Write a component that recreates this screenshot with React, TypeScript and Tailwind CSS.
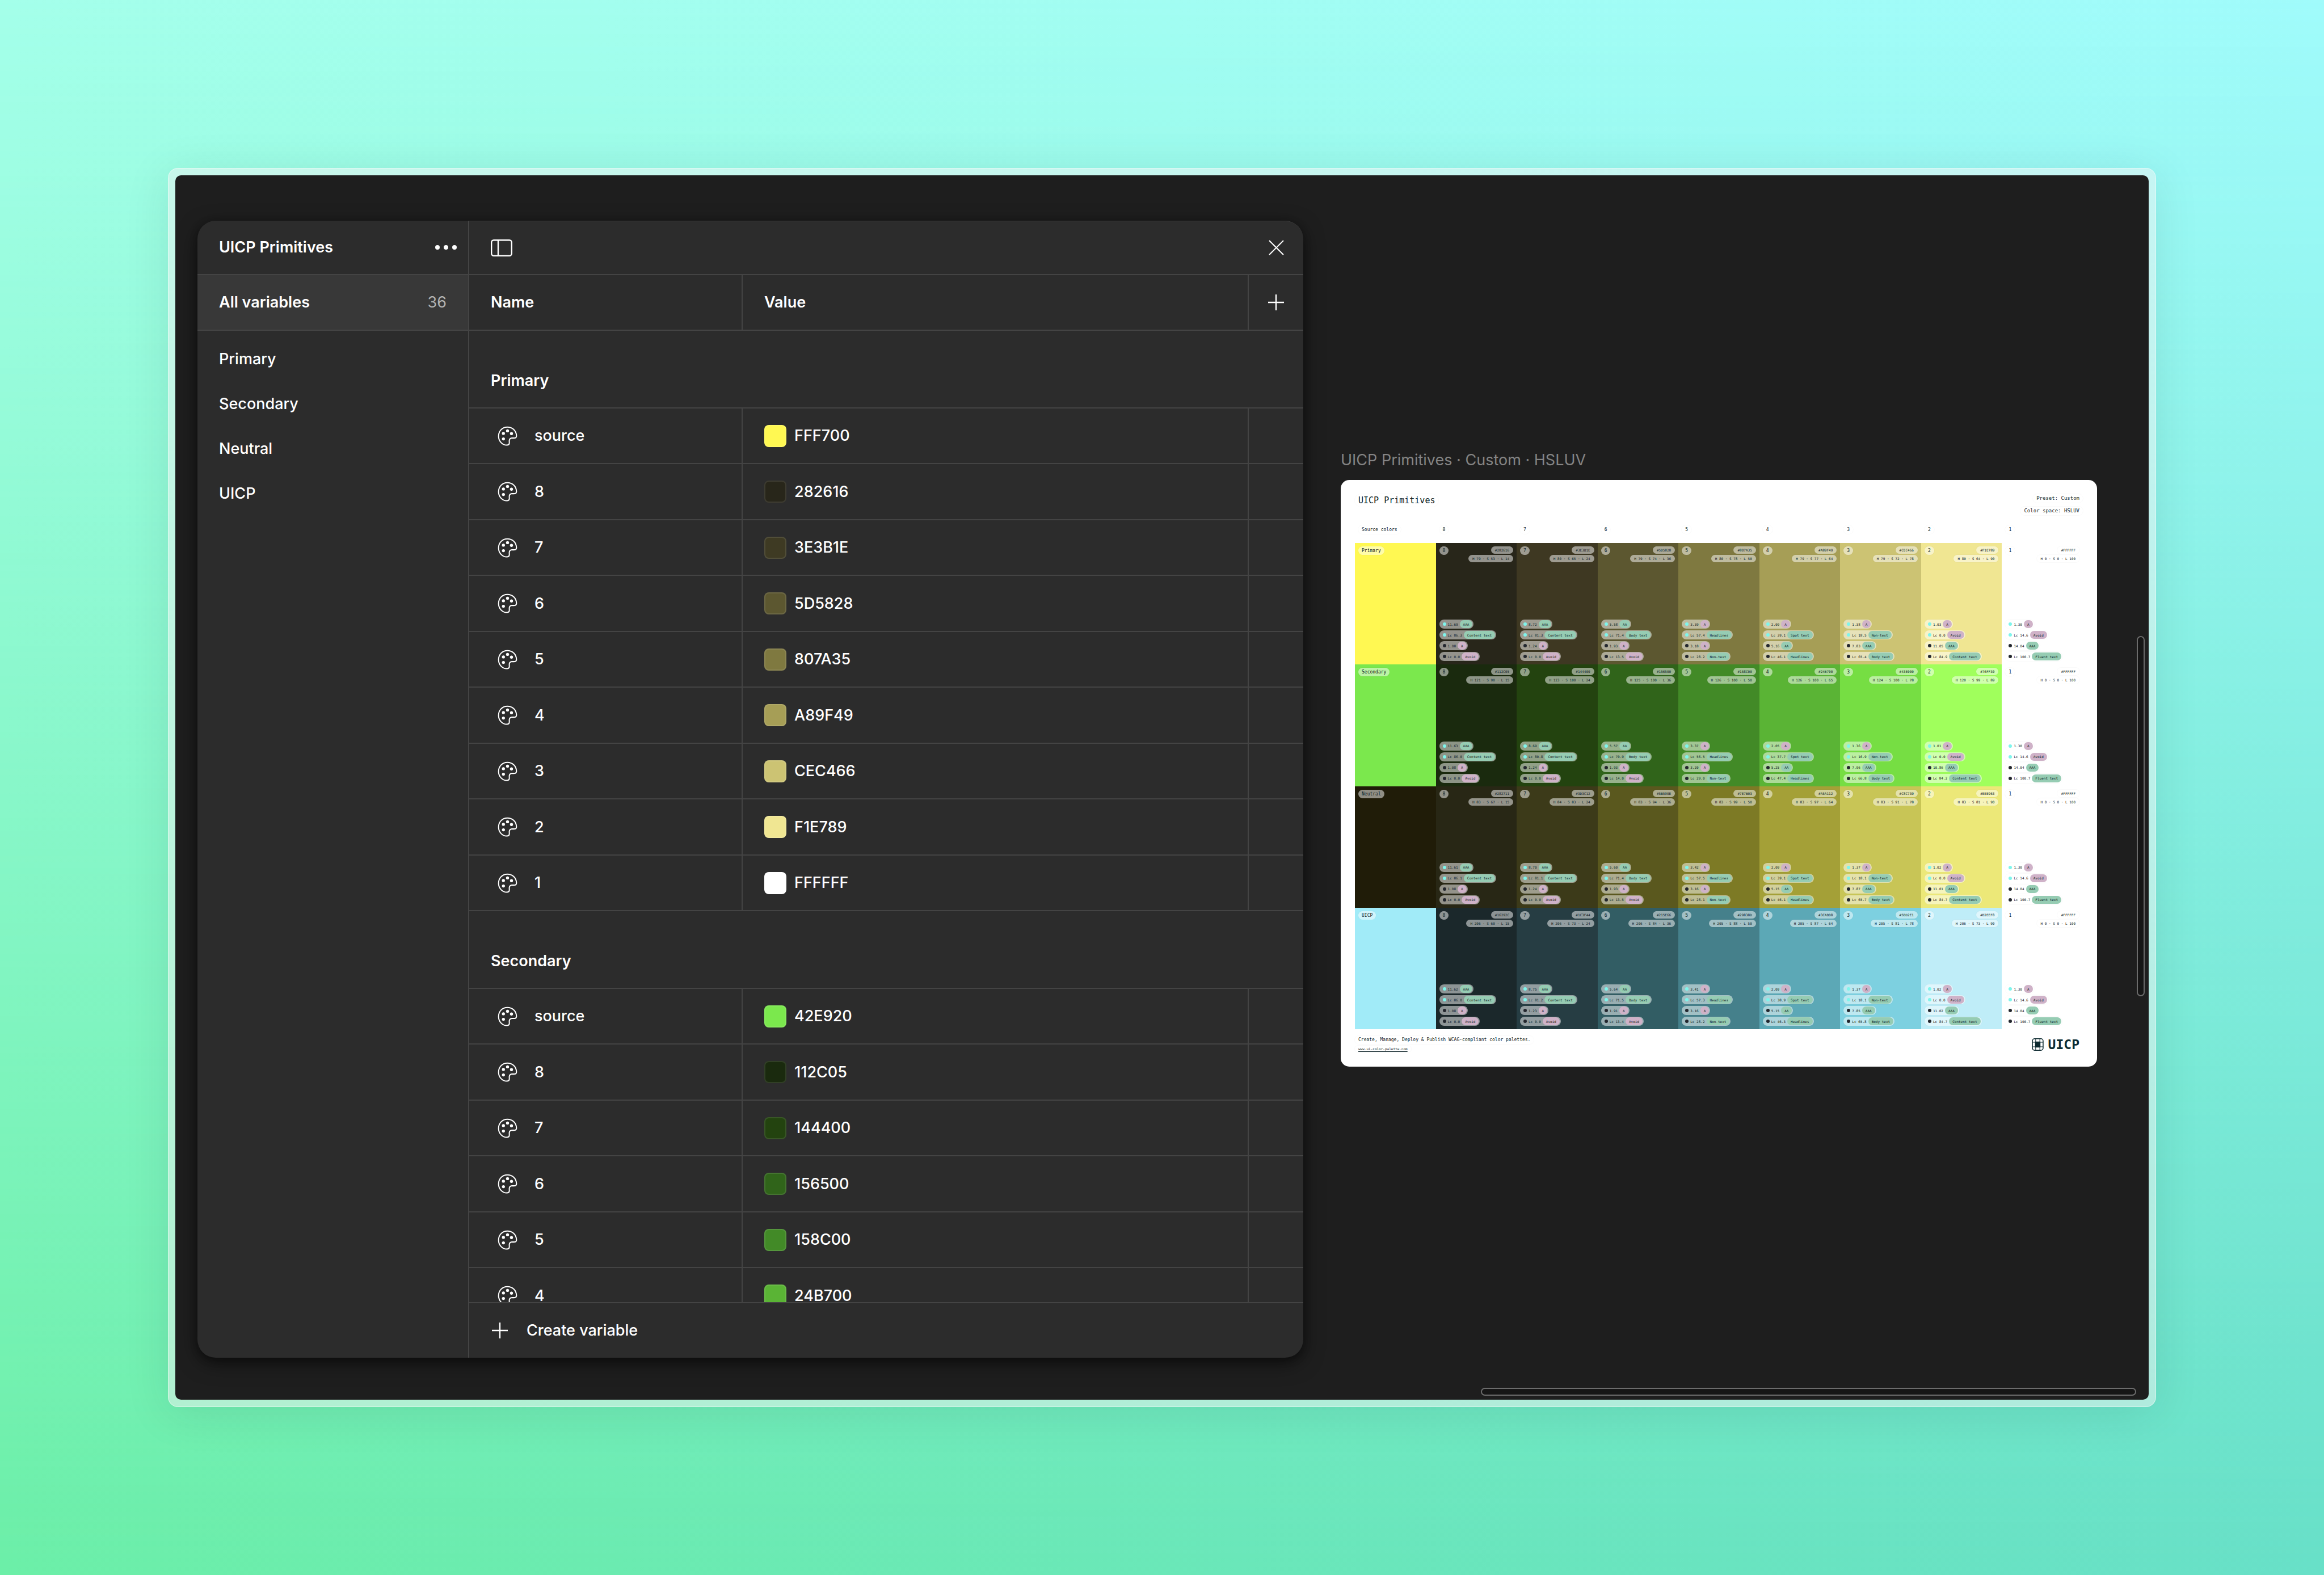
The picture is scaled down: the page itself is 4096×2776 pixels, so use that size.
import React from "react";

type Swatch = { name: string; hex: string; color: string };

const VARIABLE_GROUPS: { title: string; items: Swatch[] }[] = [
  {
    title: "Primary",
    items: [
      { name: "source", hex: "FFF700", color: "#fff852" },
      { name: "8", hex: "282616", color: "#28261a" },
      { name: "7", hex: "3E3B1E", color: "#3e3a23" },
      { name: "6", hex: "5D5828", color: "#5c5730" },
      { name: "5", hex: "807A35", color: "#7f7940" },
      { name: "4", hex: "A89F49", color: "#a69e56" },
      { name: "3", hex: "CEC466", color: "#ccc373" },
      { name: "2", hex: "F1E789", color: "#f0e692" },
      { name: "1", hex: "FFFFFF", color: "#ffffff" },
    ],
  },
  {
    title: "Secondary",
    items: [
      { name: "source", hex: "42E920", color: "#7be84d" },
      { name: "8", hex: "112C05", color: "#1a2a0e" },
      { name: "7", hex: "144400", color: "#23430f" },
      { name: "6", hex: "156500", color: "#30641a" },
      { name: "5", hex: "158C00", color: "#428a27" },
      { name: "4", hex: "24B700", color: "#5ab435" },
    ],
  },
];

const SIDEBAR_GROUPS = ["Primary", "Secondary", "Neutral", "UICP"];

type Shade = {
  color: string;
  hex: string;
  hsl: string;
  // Contrast against the light text colour, then against the dark one.
  scores: [string, string][];
};

const WHITE: Shade = {
  color: "#ffffff",
  hex: "#FFFFFF",
  hsl: "H 0 · S 0 · L 100",
  scores: [["1.30", "A"], ["Lc 14.6", "Avoid"], ["14.04", "AAA"], ["Lc 100.7", "Fluent text"]],
};

const PALETTE: { name: string; source: string; shades: Shade[] }[] = [
  {
    name: "Primary",
    source: "#fff852",
    shades: [
      { color: "#28261a", hex: "#282616", hsl: "H 79 · S 53 · L 14", scores: [["11.69", "AAA"], ["Lc 86.3", "Content text"], ["1.08", "A"], ["Lc 0.0", "Avoid"]] },
      { color: "#3e3822", hex: "#3E3B1E", hsl: "H 80 · S 65 · L 24", scores: [["8.72", "AAA"], ["Lc 81.3", "Content text"], ["1.24", "A"], ["Lc 0.0", "Avoid"]] },
      { color: "#5c5730", hex: "#5D5828", hsl: "H 79 · S 74 · L 36", scores: [["5.58", "AA"], ["Lc 71.4", "Body text"], ["1.93", "A"], ["Lc 13.5", "Avoid"]] },
      { color: "#7f7940", hex: "#807A35", hsl: "H 80 · S 78 · L 50", scores: [["3.39", "A"], ["Lc 57.4", "Headlines"], ["3.18", "A"], ["Lc 28.2", "Non-text"]] },
      { color: "#a69e56", hex: "#A89F49", hsl: "H 79 · S 77 · L 64", scores: [["2.09", "A"], ["Lc 39.1", "Spot text"], ["5.16", "AA"], ["Lc 46.1", "Headlines"]] },
      { color: "#ccc373", hex: "#CEC466", hsl: "H 79 · S 72 · L 78", scores: [["1.38", "A"], ["Lc 18.5", "Non-text"], ["7.83", "AAA"], ["Lc 65.4", "Body text"]] },
      { color: "#f0e692", hex: "#F1E789", hsl: "H 80 · S 64 · L 90", scores: [["1.03", "A"], ["Lc 0.0", "Avoid"], ["11.05", "AAA"], ["Lc 84.9", "Content text"]] },
      WHITE,
    ],
  },
  {
    name: "Secondary",
    source: "#7be84d",
    shades: [
      { color: "#1a2a0e", hex: "#112C05", hsl: "H 121 · S 90 · L 15", scores: [["11.63", "AAA"], ["Lc 86.0", "Content text"], ["1.08", "A"], ["Lc 0.0", "Avoid"]] },
      { color: "#23430f", hex: "#144400", hsl: "H 123 · S 100 · L 24", scores: [["8.69", "AAA"], ["Lc 80.8", "Content text"], ["1.24", "A"], ["Lc 0.0", "Avoid"]] },
      { color: "#30641a", hex: "#156500", hsl: "H 125 · S 100 · L 36", scores: [["5.57", "AA"], ["Lc 70.9", "Body text"], ["1.93", "A"], ["Lc 14.0", "Avoid"]] },
      { color: "#428a27", hex: "#158C00", hsl: "H 126 · S 100 · L 50", scores: [["3.37", "A"], ["Lc 56.5", "Headlines"], ["3.20", "A"], ["Lc 29.0", "Non-text"]] },
      { color: "#5ab435", hex: "#24B700", hsl: "H 126 · S 100 · L 65", scores: [["2.05", "A"], ["Lc 37.7", "Spot text"], ["5.25", "AA"], ["Lc 47.4", "Headlines"]] },
      { color: "#76de43", hex: "#43E000", hsl: "H 124 · S 100 · L 78", scores: [["1.36", "A"], ["Lc 16.9", "Non-text"], ["7.96", "AAA"], ["Lc 66.8", "Body text"]] },
      { color: "#a0ff5c", hex: "#76FF30", hsl: "H 120 · S 99 · L 89", scores: [["1.01", "A"], ["Lc 0.0", "Avoid"], ["10.86", "AAA"], ["Lc 84.2", "Content text"]] },
      WHITE,
    ],
  },
  {
    name: "Neutral",
    source: "#201c08",
    shades: [
      { color: "#282715", hex: "#282711", hsl: "H 83 · S 67 · L 15", scores: [["11.61", "AAA"], ["Lc 86.1", "Content text"], ["1.08", "A"], ["Lc 0.0", "Avoid"]] },
      { color: "#3c3a19", hex: "#3D3C12", hsl: "H 84 · S 83 · L 24", scores: [["8.70", "AAA"], ["Lc 81.1", "Content text"], ["1.24", "A"], ["Lc 0.0", "Avoid"]] },
      { color: "#5a581e", hex: "#5B590E", hsl: "H 83 · S 94 · L 36", scores: [["5.60", "AA"], ["Lc 71.4", "Body text"], ["1.93", "A"], ["Lc 13.5", "Avoid"]] },
      { color: "#7d7a25", hex: "#7E7B03", hsl: "H 83 · S 99 · L 50", scores: [["3.42", "A"], ["Lc 57.5", "Headlines"], ["3.16", "A"], ["Lc 28.1", "Non-text"]] },
      { color: "#a4a037", hex: "#A5A112", hsl: "H 83 · S 97 · L 64", scores: [["2.09", "A"], ["Lc 39.1", "Spot text"], ["5.15", "AA"], ["Lc 46.1", "Headlines"]] },
      { color: "#c8c556", hex: "#C8C739", hsl: "H 83 · S 91 · L 78", scores: [["1.37", "A"], ["Lc 18.1", "Non-text"], ["7.87", "AAA"], ["Lc 65.7", "Body text"]] },
      { color: "#ece878", hex: "#EEE963", hsl: "H 83 · S 81 · L 90", scores: [["1.02", "A"], ["Lc 0.0", "Avoid"], ["11.01", "AAA"], ["Lc 84.7", "Content text"]] },
      WHITE,
    ],
  },
  {
    name: "UICP",
    source: "#a1ebf8",
    shades: [
      { color: "#1b282b", hex: "#16292C", hsl: "H 206 · S 60 · L 15", scores: [["11.62", "AAA"], ["Lc 86.0", "Content text"], ["1.08", "A"], ["Lc 0.0", "Avoid"]] },
      { color: "#263d43", hex: "#1C3F44", hsl: "H 206 · S 73 · L 24", scores: [["8.75", "AAA"], ["Lc 81.2", "Content text"], ["1.23", "A"], ["Lc 0.0", "Avoid"]] },
      { color: "#325d64", hex: "#215E66", hsl: "H 206 · S 84 · L 36", scores: [["5.64", "AA"], ["Lc 71.5", "Body text"], ["1.91", "A"], ["Lc 13.4", "Avoid"]] },
      { color: "#45808b", hex: "#29838D", hsl: "H 205 · S 88 · L 50", scores: [["3.41", "A"], ["Lc 57.3", "Headlines"], ["3.16", "A"], ["Lc 28.2", "Non-text"]] },
      { color: "#5ca8b6", hex: "#3CABB8", hsl: "H 205 · S 87 · L 64", scores: [["2.09", "A"], ["Lc 38.9", "Spot text"], ["5.15", "AA"], ["Lc 46.3", "Headlines"]] },
      { color: "#7dd0e0", hex: "#5BD2E1", hsl: "H 205 · S 81 · L 78", scores: [["1.37", "A"], ["Lc 18.1", "Non-text"], ["7.85", "AAA"], ["Lc 65.8", "Body text"]] },
      { color: "#bfedf8", hex: "#B2EEF8", hsl: "H 206 · S 73 · L 90", scores: [["1.02", "A"], ["Lc 0.0", "Avoid"], ["11.02", "AAA"], ["Lc 84.7", "Content text"]] },
      WHITE,
    ],
  },
];

function PaletteIcon() {
  return (
    <svg className="size-[37px]" viewBox="84 90 138 138" fill="none" aria-hidden="true">
      <path
        d="M152 100C118 100 94 127 94 160C94 194 120 219 148 219C160 219 165 212 165 204C165 198 164 192 165 186C167 177 174 173 184 172.500L198 172.500C208 172 212 167 212 157C210 124 186 100 152 100Z"
        stroke="white"
        strokeWidth="7.500"
        strokeLinejoin="round"
      />
      <circle cx="153" cy="125" r="10" fill="white" />
      <circle cx="126" cy="142" r="10" fill="white" />
      <circle cx="179" cy="143" r="10" fill="white" />
      <circle cx="126" cy="178" r="10" fill="white" />
    </svg>
  );
}

function PlusIcon() {
  return (
    <svg className="size-[28px]" viewBox="0 0 28 28" fill="none" stroke="white" strokeWidth="2.400" aria-hidden="true">
      <path d="M14 0V28M0 14H28" />
    </svg>
  );
}

function Sidebar() {
  return (
    <aside className="flex w-[479px] shrink-0 flex-col border-r-2 border-[#444444]">
      <div className="flex h-[96px] items-center justify-between border-b-2 border-[#444444] pr-[20px] pl-[38px]">
        <h1 className="font-semibold">UICP Primitives</h1>
        <button type="button" aria-label="Collection options">
          <svg className="h-[8px] w-[38px]" viewBox="0 0 38 8" fill="white" aria-hidden="true">
            <circle cx="4" cy="4" r="4" />
            <circle cx="19" cy="4" r="4" />
            <circle cx="34" cy="4" r="4" />
          </svg>
        </button>
      </div>
      <button
        type="button"
        className="flex h-[98px] items-center justify-between border-b-2 border-[#444444] bg-[#383838] px-[38px] text-left"
      >
        <span className="font-semibold">All variables</span>
        <span className="font-normal text-[#b3b3b3]">36</span>
      </button>
      <nav className="flex flex-col pt-[10px]" aria-label="Groups">
        {SIDEBAR_GROUPS.map((name) => (
          <button key={name} type="button" className="flex h-[79px] items-center px-[38px] text-left">
            {name}
          </button>
        ))}
      </nav>
    </aside>
  );
}

function VariableTable() {
  return (
    <table className="w-full table-fixed border-separate border-spacing-0 text-left">
      <colgroup>
        <col className="w-[482px]" />
        <col />
        <col className="w-[96px]" />
      </colgroup>
      <thead>
        <tr className="h-[98px]">
          <th scope="col" className="border-r-2 border-b-2 border-[#444444] px-[38px] font-semibold">
            Name
          </th>
          <th scope="col" className="border-r-2 border-b-2 border-[#444444] px-[38px] font-semibold">
            Value
          </th>
          <th className="border-b-2 border-[#444444]">
            <button type="button" aria-label="Add mode" className="flex w-full items-center justify-center">
              <PlusIcon />
            </button>
          </th>
        </tr>
      </thead>
      {VARIABLE_GROUPS.map((group) => (
        <tbody key={group.title}>
          <tr className="h-[137px]">
            <th
              scope="rowgroup"
              colSpan={3}
              className="border-b-2 border-[#444444] px-[38px] pb-[27px] align-bottom font-semibold"
            >
              {group.title}
            </th>
          </tr>
          {group.items.map((item) => (
            <tr key={item.name} className="odd:h-[99px] even:h-[98px]">
              <td className="border-r-2 border-b-2 border-[#444444] pl-[38px]">
                <div className="flex items-center gap-[19px]">
                  <span className="flex w-[58px] justify-center">
                    <PaletteIcon />
                  </span>
                  {item.name}
                </div>
              </td>
              <td className="border-r-2 border-b-2 border-[#444444] pl-[38px]">
                <div className="flex items-center gap-[14px]">
                  <span
                    className="size-[39px] rounded-[8px] border-2 border-white/10"
                    style={{ backgroundColor: item.color }}
                  />
                  {item.hex}
                </div>
              </td>
              <td className="border-b-2 border-[#444444]" />
            </tr>
          ))}
        </tbody>
      ))}
    </table>
  );
}

function VariablesPanel() {
  return (
    <section
      aria-label="Variables"
      className="mt-[80px] mb-[74px] flex min-w-0 flex-[1949_1_0%] overflow-hidden rounded-[32px] bg-[#2c2c2c] text-[27px] leading-[40px] font-medium text-white shadow-[0_10px_34px_rgba(0,0,0,0.5),0_4px_14px_rgba(0,0,0,0.3)]"
    >
      <Sidebar />
      <div className="flex min-w-0 flex-1 flex-col rounded-r-[32px] border-t border-[#3c3c3c]">
        <div className="flex h-[95px] shrink-0 items-center justify-between border-b-2 border-[#444444] pr-[34px] pl-[38px]">
          <button type="button" aria-label="Toggle sidebar">
            <svg className="h-[30px] w-[38px]" viewBox="0 0 38 30" fill="none" stroke="white" strokeWidth="2.400" aria-hidden="true">
              <rect x="1.200" y="1.200" width="35.600" height="27.600" rx="4" />
              <path d="M13 1V29" />
            </svg>
          </button>
          <button type="button" aria-label="Close">
            <svg className="size-[27px]" viewBox="0 0 27 27" fill="none" stroke="white" strokeWidth="2" aria-hidden="true">
              <path d="M1 1L26 26M26 1L1 26" />
            </svg>
          </button>
        </div>
        <div className="h-0 min-h-0 grow basis-0 overflow-hidden">
          <VariableTable />
        </div>
        <button
          type="button"
          className="flex h-[98px] shrink-0 items-center gap-[33px] border-t-2 border-[#444444] pl-[40px] text-left"
        >
          <PlusIcon />
          Create variable
        </button>
      </div>
    </section>
  );
}

function ScorePill({ dot, value, rating }: { dot: "light" | "dark"; value: string; rating: string }) {
  const failing = rating === "A" || rating === "Avoid";
  return (
    <li className="flex h-[16px] items-center gap-[3px] rounded-full bg-white/50 pr-[2px] pl-[6px] ring-1 ring-black/2">
      <span className={dot === "light" ? "size-[6px] rounded-full bg-[#7ff5ec]" : "size-[6px] rounded-full bg-[#23272e]"} />
      {value}
      <span
        className={
          failing
            ? "flex h-[14px] items-center rounded-[7px] bg-[#cfb2c8] px-[6px]"
            : "flex h-[14px] items-center rounded-[7px] bg-[#96ccb3] px-[6px]"
        }
      >
        {rating}
      </span>
    </li>
  );
}

function NamePill({ children }: { children: React.ReactNode }) {
  return (
    <span className="flex h-[15px] items-center rounded-full bg-white/50 px-[6px] text-[8px] leading-[15px] ring-1 ring-black/2">
      {children}
    </span>
  );
}

function ShadeCell({ shade, label }: { shade: Shade; label: string }) {
  return (
    <div
      className="flex min-w-0 flex-col justify-between p-[6px] text-[6px] leading-[13px] whitespace-nowrap"
      style={{ backgroundColor: shade.color }}
    >
      <div className="flex items-start justify-between">
        <NamePill>{label}</NamePill>
        <div className="flex flex-col items-end gap-[2px]">
          <span className="rounded-full bg-white/50 px-[7px] ring-1 ring-black/2">{shade.hex}</span>
          <span className="rounded-full bg-white/50 px-[7px] ring-1 ring-black/2">{shade.hsl}</span>
        </div>
      </div>
      <ul className="flex flex-col items-start gap-[3px]">
        {shade.scores.map(([value, rating], i) => (
          <ScorePill key={i} dot={i < 2 ? "light" : "dark"} value={value} rating={rating} />
        ))}
      </ul>
    </div>
  );
}

function Board() {
  return (
    <article className="flex flex-col rounded-[15px] bg-white px-[25px] pt-[25px] pb-[25px] font-['DejaVu_Sans_Mono',monospace] text-[#0c2227]">
      <header className="flex h-[36px] items-start justify-between">
        <h2 className="flex h-[22px] items-center rounded-full px-[6px] text-[15px] leading-[22px] ring-1 ring-black/2">
          UICP Primitives
        </h2>
        <div className="flex flex-col items-end gap-[7px] text-[9px] leading-[15px]">
          <p className="rounded-full px-[6px] ring-1 ring-black/2">Preset: Custom</p>
          <p className="rounded-full px-[6px] ring-1 ring-black/2">Color space: HSLUV</p>
        </div>
      </header>
      <div className="mt-[19px] grid grid-cols-9">
        {["Source colors", "8", "7", "6", "5", "4", "3", "2", "1"].map((label) => (
          <div key={label} className="flex px-[6px]">
            <NamePill>{label}</NamePill>
          </div>
        ))}
      </div>
      <div className="mt-[16px] grid h-[857px] grid-cols-9 grid-rows-4">
        {PALETTE.map((row) => (
          <React.Fragment key={row.name}>
            <div className="flex items-start p-[6px]" style={{ backgroundColor: row.source }}>
              <NamePill>{row.name}</NamePill>
            </div>
            {row.shades.map((shade, i) => (
              <ShadeCell key={i} shade={shade} label={String(8 - i)} />
            ))}
          </React.Fragment>
        ))}
      </div>
      <footer className="mt-[12px] flex items-center justify-between">
        <div className="flex flex-col items-start gap-[3px]">
          <p className="rounded-full px-[6px] text-[8px] leading-[14px] ring-1 ring-black/2">
            Create, Manage, Deploy &amp; Publish WCAG-compliant color palettes.
          </p>
          <a
            href="#ui-color-palette"
            className="rounded-full px-[6px] text-[6px] leading-[12px] underline decoration-1 underline-offset-2 ring-1 ring-black/2"
          >
            www.ui-color-palette.com
          </a>
        </div>
        <div className="flex items-center gap-[8px] pr-[6px] text-[23px] leading-[28px] font-bold text-[#0d2a30]">
          <svg className="h-[22px] w-[21px]" viewBox="57 62 78 84" fill="none" stroke="currentColor" aria-hidden="true">
            <rect x="60" y="65" width="72" height="78" rx="15" strokeWidth="6" />
            <path d="M82 65V143M110 65V143M60 89H132M60 119H132" strokeWidth="4" />
            <rect x="78" y="84" width="36" height="40" fill="currentColor" stroke="none" />
          </svg>
          UICP
        </div>
      </footer>
    </article>
  );
}

export default function App() {
  return (
    <main className="relative isolate flex min-h-screen bg-[linear-gradient(to_right,#6cefa8,#68e0c8)] p-[296px] font-['Inter',sans-serif] before:absolute before:inset-0 before:-z-10 before:bg-[linear-gradient(to_right,#a4ffea,#a0fbfb)] before:mask-[linear-gradient(to_bottom,black,transparent)]">
      <div className="flex min-w-0 flex-1 rounded-[18px] border border-white/50 bg-[#f2f2f2]/50 p-[12px] shadow-[0_10px_80px_rgba(0,40,40,0.1)]">
        <div className="relative flex min-w-0 flex-1 gap-[66px] overflow-hidden rounded-[10px] bg-[#1e1e1e] pr-[91px] pl-[39px]">
          <VariablesPanel />
          <section className="mt-[486px] flex min-w-0 flex-[1333_1_0%] flex-col gap-[19px]" aria-label="Canvas">
            <p className="text-[27px] leading-[32px] text-[#848484]">UICP Primitives · Custom · HSLUV</p>
            <Board />
          </section>
          <div className="absolute top-[812px] right-[7px] h-[635px] w-[14px] rounded-full border-2 border-[#6c6c6c] bg-[#161616]" />
          <div className="absolute right-[22px] bottom-[7px] h-[14px] w-[1155px] rounded-full border-2 border-[#6c6c6c] bg-[#161616]" />
        </div>
      </div>
    </main>
  );
}
